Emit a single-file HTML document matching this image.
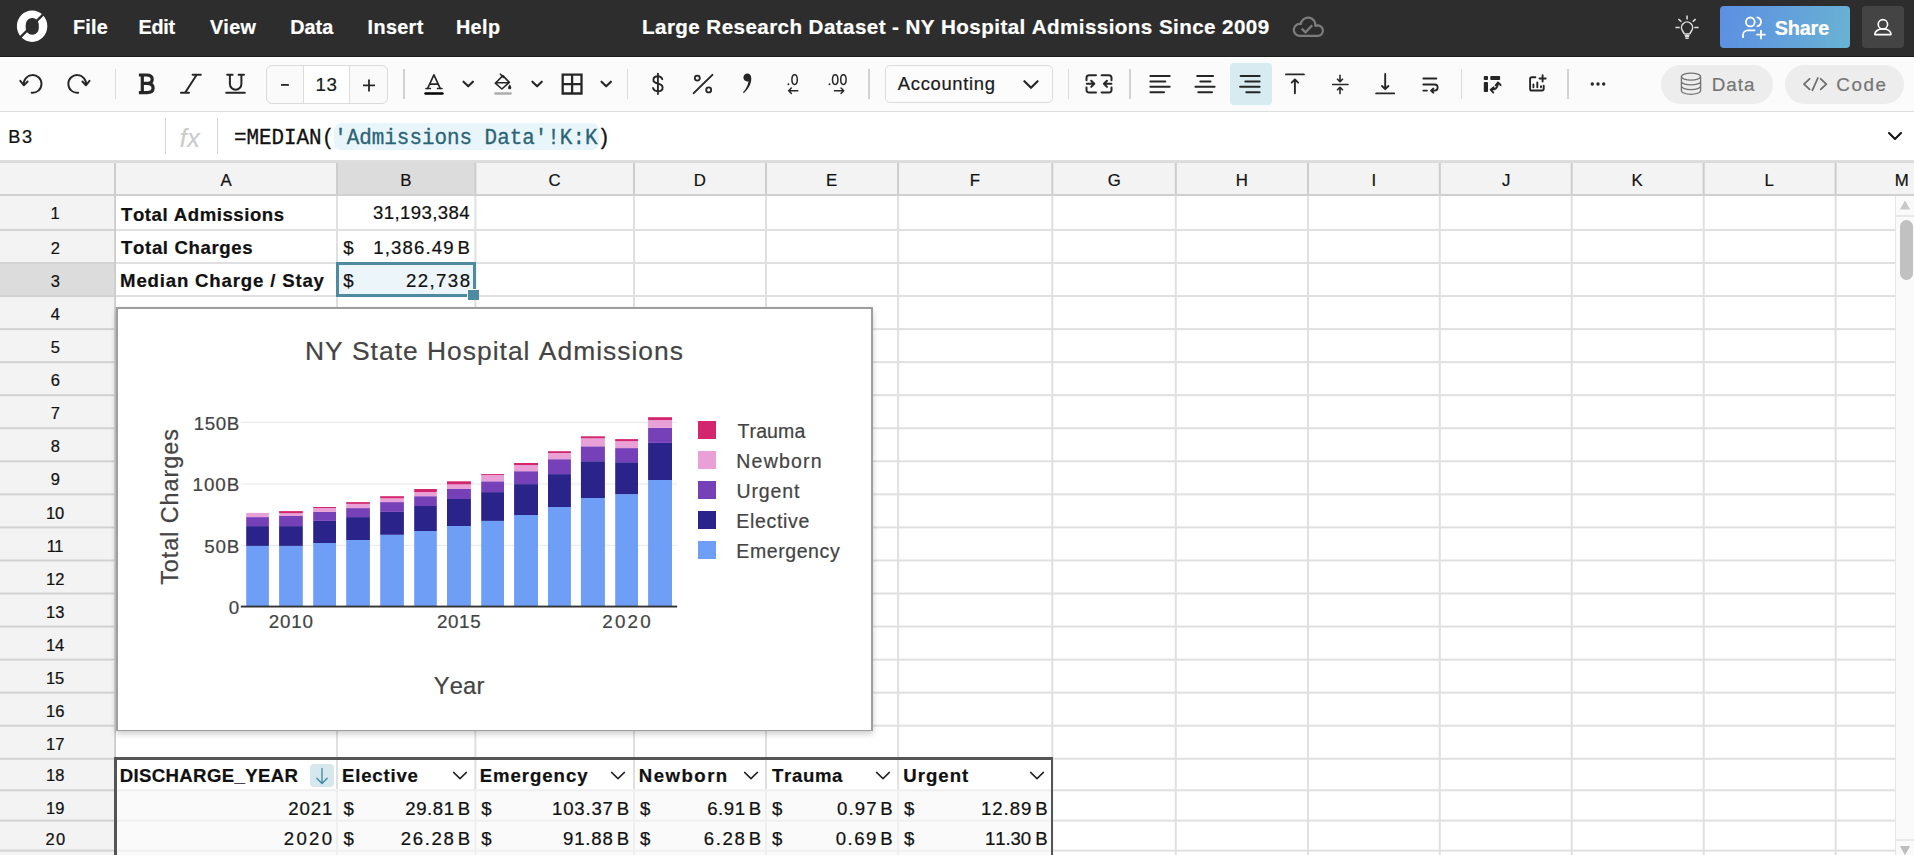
<!DOCTYPE html>
<html><head><meta charset="utf-8"><title>Quadratic</title><style>
*{box-sizing:border-box;margin:0;padding:0}
html,body{width:1914px;height:855px;overflow:hidden;background:#fff;font-family:"Liberation Sans", sans-serif;color:#111}
.abs{position:absolute}
#top{position:absolute;left:0;top:0;width:1914px;height:56px;background:#2d2d2d}
#top .m{position:absolute;top:15px;font-weight:700;font-size:19.5px;color:#fff;line-height:24px;white-space:nowrap}
#tb{position:absolute;left:0;top:56px;width:1914px;height:56px;background:#fbfbfb;border-bottom:1px solid #dedede}
.sep{position:absolute;top:13px;width:1px;height:30px;background:#d9d9d9}
#fb{position:absolute;left:0;top:112px;width:1914px;height:49px;background:#fff}
#grid{position:absolute;left:0;top:161px;width:1914px;height:694px;background:#fff;overflow:hidden}
.hl{position:absolute;left:0;height:1.5px;background:#e0e0e0}
.vl{position:absolute;top:0;width:1.5px;background:#e0e0e0}
.ch{position:absolute;top:2px;height:32px;font-size:16px;line-height:32px;text-align:center;color:#111}
.rh{position:absolute;left:0;width:115px;font-size:16px;text-align:center;color:#111}
.c{position:absolute;font-size:18.6px;white-space:nowrap;color:#111}
.b{font-weight:700}
</style></head><body><div id="top">
<svg class="abs" style="left:0;top:0" width="64" height="56" viewBox="0 0 64 56">
<ellipse cx="32.1" cy="26.2" rx="15.2" ry="15.7" fill="#fff"/>
<rect x="25.7" y="18" width="13.1" height="16.8" rx="6.3" ry="6.8" fill="#2d2d2d"/>
<path d="M19 38.6 L45 12.6" stroke="#2d2d2d" stroke-width="2.3"/>
</svg>
<div style="position:absolute;top:18.00px;font-size:19.8px;line-height:19.8px;white-space:pre;color:#fff;font-kerning:none;-webkit-text-stroke:0.22px;font-weight:700;letter-spacing:0.258px;left:72.99px;">File</div>
<div style="position:absolute;top:18.00px;font-size:19.8px;line-height:19.8px;white-space:pre;color:#fff;font-kerning:none;-webkit-text-stroke:0.22px;font-weight:700;letter-spacing:-0.250px;left:138.49px;">Edit</div>
<div style="position:absolute;top:18.00px;font-size:19.8px;line-height:19.8px;white-space:pre;color:#fff;font-kerning:none;-webkit-text-stroke:0.22px;font-weight:700;letter-spacing:0.285px;left:209.88px;">View</div>
<div style="position:absolute;top:18.00px;font-size:19.8px;line-height:19.8px;white-space:pre;color:#fff;font-kerning:none;-webkit-text-stroke:0.22px;font-weight:700;letter-spacing:0.018px;left:290.29px;">Data</div>
<div style="position:absolute;top:18.00px;font-size:19.8px;line-height:19.8px;white-space:pre;color:#fff;font-kerning:none;-webkit-text-stroke:0.22px;font-weight:700;letter-spacing:0.365px;left:367.59px;">Insert</div>
<div style="position:absolute;top:18.00px;font-size:19.8px;line-height:19.8px;white-space:pre;color:#fff;font-kerning:none;-webkit-text-stroke:0.22px;font-weight:700;letter-spacing:0.436px;left:455.89px;">Help</div>
<div style="position:absolute;top:17.00px;font-size:20.6px;line-height:20.6px;white-space:pre;color:#fff;font-kerning:none;-webkit-text-stroke:0.22px;font-weight:700;letter-spacing:0.420px;left:642.04px;">Large Research Dataset - NY Hospital Admissions Since 2009</div>
<svg class="abs" style="left:0;top:0" width="1914" height="56" viewBox="0 0 1914 56" fill="none" stroke-linecap="round" stroke-linejoin="round">
<path d="M1299.5 35.8 A5.95 5.95 0 1 1 1300.8 24 A7.3 7.3 0 0 1 1315.4 26 A5.2 5.2 0 1 1 1317.2 35.8 Z" stroke="#7d7d7d" stroke-width="2.2"/>
<path d="M1301.8 28.6 L1305.5 32.3 L1312.2 25.2" stroke="#7d7d7d" stroke-width="2.3" stroke-linecap="butt" stroke-linejoin="miter"/>
<g stroke="#dedede" stroke-width="1.55">
<path d="M1684.1 33.5 L1682.6 30.9 A5.55 5.55 0 1 1 1691.5 30.9 L1690 33.5"/>
<path d="M1684.4 33.9 H1689.7 M1684.6 35.4 H1689.5 M1685.0 36.7 H1689.1" stroke-linecap="butt" stroke-width="1.3"/>
<path d="M1685.4 38.2 H1688.7" stroke-linecap="butt" stroke-width="1.5"/>
<path d="M1687.05 15.4 V19.5 M1678.4 19.2 L1681.4 21.7 M1695.7 19.2 L1692.7 21.7 M1675.4 27.5 H1679.7 M1694.3 27.5 H1698.6" stroke-linecap="butt"/>
</g>
</svg>
<div class="abs" style="left:1720.1px;top:5.9px;width:130.1px;height:42.1px;border-radius:4px;background:linear-gradient(105deg,#5c8ee3,#69b3d3)"></div>
<div class="abs" style="left:1862.2px;top:5.9px;width:41.8px;height:42.1px;border-radius:4px;background:#444"></div>
<svg class="abs" style="left:1700px;top:0" width="214" height="56" viewBox="1700 0 214 56" fill="none" stroke="#fff" stroke-width="1.8" stroke-linecap="round" stroke-linejoin="round">
<circle cx="1750.3" cy="21.9" r="4.4"/>
<path d="M1757.3 17.4 A4.5 4.5 0 0 1 1757.5 26.2"/>
<path d="M1743 37.2 V35.2 A4.8 4.8 0 0 1 1747.8 30.4 H1754.6"/>
<path d="M1761 30.6 V38.6 M1757 34.6 H1765"/>
<g stroke-width="1.6"><circle cx="1882.9" cy="24.3" r="4.7"/>
<path d="M1874.8 34.6 C1874.8 31.2 1878.2 28.9 1882.9 28.9 C1887.6 28.9 1891 31.2 1891 34.6 Z"/></g>
</svg>
<div style="position:absolute;top:19.00px;font-size:19.8px;line-height:19.8px;white-space:pre;color:#fff;font-kerning:none;-webkit-text-stroke:0.22px;font-weight:700;letter-spacing:-0.100px;left:1774.65px;">Share</div>
</div>
<div id="tb"><div class="abs" style="left:0;top:0;width:1914px;height:1px;background:#1c1c1c"></div><div class="abs" style="left:0;top:1px;width:1914px;height:1px;background:#fff"></div>
<div style="position:absolute;left:1230px;top:7px;width:42px;height:41.6px;border-radius:4px;background:#d8ebf0"></div>
<div style="position:absolute;left:114.8px;top:13.3px;width:1.2px;height:29.4px;background:#dadada"></div>
<div style="position:absolute;left:402.9px;top:13.3px;width:2.0px;height:29.4px;background:#d2d2d2"></div>
<div style="position:absolute;left:626.9px;top:13.3px;width:1.2px;height:29.4px;background:#dadada"></div>
<div style="position:absolute;left:867.8px;top:13.3px;width:2.0px;height:29.4px;background:#d2d2d2"></div>
<div style="position:absolute;left:1067.9px;top:13.3px;width:1.2px;height:29.4px;background:#dadada"></div>
<div style="position:absolute;left:1129.0px;top:13.3px;width:2.0px;height:29.4px;background:#d2d2d2"></div>
<div style="position:absolute;left:1460.9px;top:13.3px;width:1.2px;height:29.4px;background:#dadada"></div>
<div style="position:absolute;left:1566.9px;top:13.3px;width:2.0px;height:29.4px;background:#d2d2d2"></div>
<div style="position:absolute;left:266.3px;top:8.9px;width:121.3px;height:38.7px;border:1px solid #dcdcdc;border-radius:6px;background:#fafafa;overflow:hidden"><div style="position:absolute;left:35.7px;top:0;width:47.4px;height:37px;background:#fff;border-left:1px solid #dcdcdc;border-right:1px solid #dcdcdc"></div></div>
<div style="position:absolute;top:20.00px;font-size:18.8px;line-height:18.8px;white-space:pre;color:#1a1a1a;font-kerning:none;-webkit-text-stroke:0.22px;letter-spacing:0.429px;left:315.52px;">13</div>
<div style="position:absolute;left:885.4px;top:8.9px;width:167.2px;height:38.2px;border:1px solid #dcdcdc;border-radius:5px;background:#fcfcfc"></div>
<div style="position:absolute;top:19.00px;font-size:18.4px;line-height:18.4px;white-space:pre;color:#1a1a1a;font-kerning:none;-webkit-text-stroke:0.22px;letter-spacing:0.675px;left:897.86px;">Accounting</div>
<div style="position:absolute;left:1661px;top:8.8px;width:111.8px;height:39.3px;border-radius:20px;background:#ededed"></div>
<div style="position:absolute;left:1785.2px;top:8.8px;width:118.6px;height:39.3px;border-radius:20px;background:#ededed"></div>
<div style="position:absolute;top:20.00px;font-size:18.8px;line-height:18.8px;white-space:pre;color:#767676;font-kerning:none;-webkit-text-stroke:0.22px;letter-spacing:0.938px;left:1711.86px;">Data</div>
<div style="position:absolute;top:20.00px;font-size:18.8px;line-height:18.8px;white-space:pre;color:#767676;font-kerning:none;-webkit-text-stroke:0.22px;letter-spacing:1.575px;left:1836.36px;">Code</div>
<svg style="position:absolute;left:0;top:0" width="1914" height="56" viewBox="0 56 1914 56" fill="none" stroke="#262626" stroke-width="2" stroke-linecap="round" stroke-linejoin="round">
<path d="M23.9 85.3 A8.85 8.85 0 1 1 31.6 92.7 M20.3 80.8 L23.9 85.3 L27.6 81.5" stroke-width="1.9"/>
<path d="M85.9 85.3 A8.85 8.85 0 1 0 78.2 92.7 M89.5 80.8 L85.9 85.3 L82.4 81.5" stroke-width="1.9"/>
<path d="M138.9 75 H146.5 C150.4 75 152.2 76.8 152.2 79.2 C152.2 81.6 150.4 83.4 146.8 83.4 H142.5 M146.8 83.4 C151.2 83.4 153.1 85.4 153.1 88 C153.1 90.6 151.2 92.6 147 92.6 H138.9 M142.3 75 V92.6" stroke-width="3.2" stroke-linecap="butt"/>
<path d="M192.6 74.8 H200.8 M181 92.8 H189 M196.7 74.8 L185.1 92.8" stroke-width="2"/>
<path d="M227.2 74.8 H232.6 M238.6 74.8 H244 M229.9 74.8 V84 A5.75 5.75 0 0 0 241.4 84 V74.8 M226.2 92.8 H244.8" stroke-width="2"/>
<path d="M281 84.9 H288.9" stroke-width="1.8" stroke-linecap="butt"/>
<path d="M363 85.4 H375 M369 79.4 V91.4" stroke-width="1.8" stroke-linecap="butt"/>
<path d="M427.6 88.5 L433.9 74.9 L440.3 88.5 M429.8 84.1 H438 M426 88.5 H430.3 M437.6 88.5 H441.9" stroke-width="1.7"/>
<rect x="424.3" y="92.2" width="19.4" height="2.6" rx="1.3" fill="#000" stroke="none"/>
<path d="M463.5 81.7 L468.2 86.3 L472.9 81.7" stroke-width="2.1"/>
<path d="M532.4 81.7 L537.1 86.3 L541.8 81.7" stroke-width="2.1"/>
<path d="M601.5 81.7 L606.2 86.3 L610.9 81.7" stroke-width="2.1"/>
<path d="M502.9 75.6 L509.3 82.4 L501.9 89 L495.3 83.2 Z M495.6 82.8 H509 M500.4 74.2 L503.6 77.4" stroke-width="1.6"/>
<path d="M509.7 84.6 C510.9 86.2 511.3 87 511.3 87.7 A1.6 1.6 0 0 1 508.1 87.7 C508.1 87 508.5 86.2 509.7 84.6 Z" fill="#262626" stroke="none"/>
<rect x="494.2" y="92.2" width="17.6" height="2.6" rx="1.3" fill="#adadad" stroke="none"/>
<path d="M562.7 74.7 H581.5 V93.5 H562.7 Z M572.1 74.7 V93.5 M562.7 84.1 H581.5" stroke-width="2.3" stroke-linejoin="miter"/>
<path d="M662.3 79.2 C661.6 77.4 660 76.3 657.9 76.3 C655.2 76.3 653.4 77.8 653.4 79.9 C653.4 84.6 662.6 82.4 662.6 87.4 C662.6 89.6 660.7 91.2 657.9 91.2 C655.4 91.2 653.7 90 653 88 M657.9 73.6 V94" stroke-width="1.9"/>
<path d="M712.4 74.9 L693.7 93.1" stroke-width="2"/><circle cx="697.3" cy="78.1" r="2.5" stroke-width="1.8"/><circle cx="708.7" cy="89.9" r="2.5" stroke-width="1.8"/>
<path d="M747.3 73.6 C749.6 73.6 751.3 75.3 751.3 78.6 C751.3 84.5 748.2 89.3 743.9 93.2 L743 92.3 C746.1 88.8 747.9 85.6 748.5 81.3 C748.2 81.4 747.7 81.5 747.2 81.5 C745 81.5 743.4 79.8 743.4 77.6 C743.4 75.3 745.1 73.6 747.3 73.6 Z" fill="#262626" stroke="none"/>
<circle cx="788.4" cy="84.3" r="0.95" fill="#262626" stroke="none"/><ellipse cx="794.6" cy="79.6" rx="2.7" ry="4.9" stroke-width="1.5"/>
<path d="M797.8 90.7 H788.6 M791.4 87.9 L788.6 90.7 L791.4 93.5" stroke-width="1.4"/>
<circle cx="829.5" cy="84.3" r="0.95" fill="#262626" stroke="none"/><ellipse cx="835.2" cy="79.6" rx="2.7" ry="4.9" stroke-width="1.5"/><ellipse cx="843.4" cy="79.6" rx="2.7" ry="4.9" stroke-width="1.5"/>
<path d="M834.4 90.7 H843.8 M841 87.9 L843.8 90.7 L841 93.5" stroke-width="1.4"/>
<path d="M1024.4 81.2 L1031 87.8 L1037.6 81.2" stroke-width="2.2"/>
<path d="M1086.5 80.3 V78 A2.6 2.6 0 0 1 1089.1 75.2 H1096 M1101.6 75.2 H1108.9 A2.6 2.6 0 0 1 1111.5 78 V80.3 M1111.5 87.4 V89.8 A2.6 2.6 0 0 1 1108.9 92.6 H1101.6 M1096 92.6 H1089.1 A2.6 2.6 0 0 1 1086.5 89.8 V87.4" stroke-width="2"/>
<path d="M1086.8 83.8 H1094.3 M1091.2 80.7 L1094.3 83.8 L1091.2 86.9 M1111.4 83.8 H1103.9 M1107 80.7 L1103.9 83.8 L1107 86.9" stroke-width="2"/>
<path d="M1150.4 75.9 H1169.7 M1150.4 81.4 H1165.3 M1150.4 86.8 H1169.7 M1150.4 92.2 H1164" stroke-width="2"/>
<path d="M1197.2 75.9 H1213.1 M1200.3 81.4 H1210.5 M1195.4 86.8 H1214.6 M1198.3 92.2 H1212" stroke-width="2"/>
<path d="M1240.6 75.9 H1259.6 M1245.3 81.4 H1259.6 M1240.1 86.8 H1259.6 M1246.3 92.2 H1259.6" stroke-width="2"/>
<path d="M1286 74.4 H1303.9 M1294.9 93.2 V79.4 M1291.7 82.6 L1294.9 79.4 L1298.1 82.6" stroke-width="1.9"/>
<path d="M1332.6 84.5 H1348 M1340 75.2 V81.6 M1337.5 79.2 L1340 81.7 L1342.5 79.2 M1340 93.6 V87.4 M1337.5 89.8 L1340 87.3 L1342.5 89.8" stroke-width="1.6"/>
<path d="M1385.2 74 V89 M1382 86 L1385.2 89.2 L1388.4 86 M1376.2 93.4 H1394.1" stroke-width="1.9"/>
<path d="M1423.3 78.5 H1436.4 M1423.3 84.5 H1434.6 A3.05 3.05 0 0 1 1434.6 90.6 H1431.2 M1433.4 88.5 L1431 90.6 L1433.4 92.7 M1423.3 90.6 H1427" stroke-width="1.8"/>
<g fill="#262626" stroke="none"><rect x="1483.8" y="76" width="4.2" height="4" rx="0.8"/><rect x="1490.3" y="76" width="9.8" height="4" rx="0.8"/><rect x="1483.8" y="82.1" width="4.2" height="9.9" rx="0.8"/></g>
<path d="M1491.6 89.6 C1495.8 89.6 1497.6 87.6 1497.9 83.6 M1495.6 85.4 L1498 82.4 L1500.6 85 M1493.7 87.2 L1490.6 89.7 L1493.3 92.6" stroke-width="1.8"/>
<path d="M1535.4 77.2 H1531.7 A1.6 1.6 0 0 0 1530.1 78.8 V88.9 A1.6 1.6 0 0 0 1531.7 90.5 H1542.1 A1.6 1.6 0 0 0 1543.7 88.9 V85.6 M1542.6 75.2 V81.6 M1539.5 78.5 H1545.7 M1533.4 84.4 V87.2 M1537.3 82.5 V87.2 M1541 86.3 V87.2" stroke-width="1.9"/>
<g fill="#262626" stroke="none"><circle cx="1592.3" cy="84" r="1.7"/><circle cx="1598" cy="84" r="1.7"/><circle cx="1603.7" cy="84" r="1.7"/></g>
<g stroke="#727272" stroke-width="1.3"><ellipse cx="1691" cy="76.6" rx="9.6" ry="3.5"/><path d="M1681.4 76.6 V90.8 C1681.4 92.7 1685.7 94.3 1691 94.3 C1696.3 94.3 1700.6 92.7 1700.6 90.8 V76.6 M1681.4 81.4 C1681.4 83.3 1685.7 84.9 1691 84.9 C1696.3 84.9 1700.6 83.3 1700.6 81.4 M1681.4 86.1 C1681.4 88 1685.7 89.6 1691 89.6 C1696.3 89.6 1700.6 88 1700.6 86.1"/></g>
<path d="M1809.6 78.8 L1804 84.1 L1809.6 89.4 M1817.9 78 L1812.4 90.2 M1820.7 78.8 L1826.3 84.1 L1820.7 89.4" stroke="#6e6e6e" stroke-width="1.8"/>
</svg>
</div>
<div id="fb">
<div style="position:absolute;top:16.00px;font-size:18.2px;line-height:18.2px;white-space:pre;color:#111;font-kerning:none;-webkit-text-stroke:0.22px;letter-spacing:1.516px;left:8.31px;">B3</div>
<div class="abs" style="left:165px;top:6px;width:1px;height:36px;background:#d4d4d4"></div>
<div class="abs" style="left:217px;top:6px;width:1px;height:36px;background:#d4d4d4"></div>
<div style="position:absolute;top:14.00px;font-size:25px;line-height:25px;white-space:pre;color:#cbcbcb;font-kerning:none;-webkit-text-stroke:0.22px;font-style:italic;letter-spacing:0.629px;left:179.78px;">fx</div>
<div class="abs" style="left:333.7px;top:11.2px;width:265px;height:27.3px;border-radius:7px;background:#e8f6fb"></div>
<div class="abs" style="left:233.9px;top:16.78px;font-family:'Liberation Mono',monospace;font-size:20.9px;line-height:20.9px;white-space:pre;color:#111;-webkit-text-stroke:0.3px;transform-origin:0 16.02px;transform:scaleY(1.06)">=MEDIAN(<span style="color:#2c6377">'Admissions Data'!K:K</span>)</div>
<svg class="abs" style="left:1886px;top:18px" width="18" height="12" viewBox="0 0 18 12" fill="none" stroke="#111" stroke-width="2" stroke-linecap="round" stroke-linejoin="round"><path d="M3 3 l6 6 l6 -6"/></svg>
<div class="abs" style="left:0;top:48px;width:1914px;height:1px;background:#dedede"></div>
</div>
<div id="grid">
<div style="position:absolute;left:0;top:0;width:1914px;height:2px;background:#dcdcdc"></div>
<div style="position:absolute;left:0;top:2px;width:1914px;height:32px;background:#f3f3f3"></div>
<div style="position:absolute;left:337px;top:2px;width:137.5px;height:32px;background:#dcdcdc"></div>
<div style="position:absolute;left:0;top:34px;width:115px;height:660px;background:#f3f3f3"></div>
<div style="position:absolute;left:0;top:102px;width:115px;height:33px;background:#dcdcdc"></div>
<svg style="position:absolute;left:0;top:0" width="1914" height="694" viewBox="0 0 1914 694">
<rect x="115" y="67.95" width="1781" height="2" fill="#e0e0e0"/>
<rect x="0" y="67.95" width="115" height="2" fill="#d2d2d2"/>
<rect x="115" y="101.00" width="1781" height="2" fill="#e0e0e0"/>
<rect x="0" y="101.00" width="115" height="2" fill="#d2d2d2"/>
<rect x="115" y="134.05" width="1781" height="2" fill="#e0e0e0"/>
<rect x="0" y="134.05" width="115" height="2" fill="#d2d2d2"/>
<rect x="115" y="167.10" width="1781" height="2" fill="#e0e0e0"/>
<rect x="0" y="167.10" width="115" height="2" fill="#d2d2d2"/>
<rect x="115" y="200.15" width="1781" height="2" fill="#e0e0e0"/>
<rect x="0" y="200.15" width="115" height="2" fill="#d2d2d2"/>
<rect x="115" y="233.20" width="1781" height="2" fill="#e0e0e0"/>
<rect x="0" y="233.20" width="115" height="2" fill="#d2d2d2"/>
<rect x="115" y="266.25" width="1781" height="2" fill="#e0e0e0"/>
<rect x="0" y="266.25" width="115" height="2" fill="#d2d2d2"/>
<rect x="115" y="299.30" width="1781" height="2" fill="#e0e0e0"/>
<rect x="0" y="299.30" width="115" height="2" fill="#d2d2d2"/>
<rect x="115" y="332.35" width="1781" height="2" fill="#e0e0e0"/>
<rect x="0" y="332.35" width="115" height="2" fill="#d2d2d2"/>
<rect x="115" y="365.40" width="1781" height="2" fill="#e0e0e0"/>
<rect x="0" y="365.40" width="115" height="2" fill="#d2d2d2"/>
<rect x="115" y="398.45" width="1781" height="2" fill="#e0e0e0"/>
<rect x="0" y="398.45" width="115" height="2" fill="#d2d2d2"/>
<rect x="115" y="431.50" width="1781" height="2" fill="#e0e0e0"/>
<rect x="0" y="431.50" width="115" height="2" fill="#d2d2d2"/>
<rect x="115" y="464.55" width="1781" height="2" fill="#e0e0e0"/>
<rect x="0" y="464.55" width="115" height="2" fill="#d2d2d2"/>
<rect x="115" y="497.60" width="1781" height="2" fill="#e0e0e0"/>
<rect x="0" y="497.60" width="115" height="2" fill="#d2d2d2"/>
<rect x="115" y="530.65" width="1781" height="2" fill="#e0e0e0"/>
<rect x="0" y="530.65" width="115" height="2" fill="#d2d2d2"/>
<rect x="115" y="563.70" width="1781" height="2" fill="#e0e0e0"/>
<rect x="0" y="563.70" width="115" height="2" fill="#d2d2d2"/>
<rect x="115" y="596.75" width="1781" height="2" fill="#e0e0e0"/>
<rect x="0" y="596.75" width="115" height="2" fill="#d2d2d2"/>
<rect x="115" y="628.30" width="1781" height="2" fill="#e0e0e0"/>
<rect x="0" y="628.30" width="115" height="2" fill="#d2d2d2"/>
<rect x="115" y="658.60" width="1781" height="2" fill="#e0e0e0"/>
<rect x="0" y="658.60" width="115" height="2" fill="#d2d2d2"/>
<rect x="115" y="688.60" width="1781" height="2" fill="#e0e0e0"/>
<rect x="0" y="688.60" width="115" height="2" fill="#d2d2d2"/>
<rect x="336.00" y="34" width="2" height="660" fill="#e0e0e0"/>
<rect x="474.40" y="34" width="2" height="660" fill="#e0e0e0"/>
<rect x="633.00" y="34" width="2" height="660" fill="#e0e0e0"/>
<rect x="765.00" y="34" width="2" height="660" fill="#e0e0e0"/>
<rect x="897.10" y="34" width="2" height="660" fill="#e0e0e0"/>
<rect x="1051.30" y="34" width="2" height="660" fill="#e0e0e0"/>
<rect x="1174.80" y="34" width="2" height="660" fill="#e0e0e0"/>
<rect x="1307.00" y="34" width="2" height="660" fill="#e0e0e0"/>
<rect x="1438.80" y="34" width="2" height="660" fill="#e0e0e0"/>
<rect x="1570.70" y="34" width="2" height="660" fill="#e0e0e0"/>
<rect x="1702.70" y="34" width="2" height="660" fill="#e0e0e0"/>
<rect x="1834.60" y="34" width="2" height="660" fill="#e0e0e0"/>
<rect x="114.00" y="2" width="2" height="33" fill="#cdcdcd"/>
<rect x="336.00" y="2" width="2" height="33" fill="#cdcdcd"/>
<rect x="474.40" y="2" width="2" height="33" fill="#cdcdcd"/>
<rect x="633.00" y="2" width="2" height="33" fill="#cdcdcd"/>
<rect x="765.00" y="2" width="2" height="33" fill="#cdcdcd"/>
<rect x="897.10" y="2" width="2" height="33" fill="#cdcdcd"/>
<rect x="1051.30" y="2" width="2" height="33" fill="#cdcdcd"/>
<rect x="1174.80" y="2" width="2" height="33" fill="#cdcdcd"/>
<rect x="1307.00" y="2" width="2" height="33" fill="#cdcdcd"/>
<rect x="1438.80" y="2" width="2" height="33" fill="#cdcdcd"/>
<rect x="1570.70" y="2" width="2" height="33" fill="#cdcdcd"/>
<rect x="1702.70" y="2" width="2" height="33" fill="#cdcdcd"/>
<rect x="1834.60" y="2" width="2" height="33" fill="#cdcdcd"/>
<rect x="0" y="33" width="1914" height="2" fill="#d0d0d0"/>
<rect x="114.2" y="34" width="1.8" height="660" fill="#cccccc"/>
</svg>
<div style="position:absolute;left:116px;top:628.3px;width:936px;height:66px;background:rgba(247,247,247,0.64)"></div>
<div style="position:absolute;top:12.00px;font-size:16.8px;line-height:16.8px;white-space:pre;color:#111;font-kerning:none;-webkit-text-stroke:0.22px;left:220.40px;">A</div>
<div style="position:absolute;top:12.00px;font-size:16.8px;line-height:16.8px;white-space:pre;color:#111;font-kerning:none;-webkit-text-stroke:0.22px;left:400.35px;">B</div>
<div style="position:absolute;top:12.00px;font-size:16.8px;line-height:16.8px;white-space:pre;color:#111;font-kerning:none;-webkit-text-stroke:0.22px;left:548.53px;">C</div>
<div style="position:absolute;top:12.00px;font-size:16.8px;line-height:16.8px;white-space:pre;color:#111;font-kerning:none;-webkit-text-stroke:0.22px;left:693.64px;">D</div>
<div style="position:absolute;top:12.00px;font-size:16.8px;line-height:16.8px;white-space:pre;color:#111;font-kerning:none;-webkit-text-stroke:0.22px;left:826.11px;">E</div>
<div style="position:absolute;top:12.00px;font-size:16.8px;line-height:16.8px;white-space:pre;color:#111;font-kerning:none;-webkit-text-stroke:0.22px;left:969.71px;">F</div>
<div style="position:absolute;top:12.00px;font-size:16.8px;line-height:16.8px;white-space:pre;color:#111;font-kerning:none;-webkit-text-stroke:0.22px;left:1107.72px;">G</div>
<div style="position:absolute;top:12.00px;font-size:16.8px;line-height:16.8px;white-space:pre;color:#111;font-kerning:none;-webkit-text-stroke:0.22px;left:1235.83px;">H</div>
<div style="position:absolute;top:12.00px;font-size:16.8px;line-height:16.8px;white-space:pre;color:#111;font-kerning:none;-webkit-text-stroke:0.22px;left:1371.56px;">I</div>
<div style="position:absolute;top:12.00px;font-size:16.8px;line-height:16.8px;white-space:pre;color:#111;font-kerning:none;-webkit-text-stroke:0.22px;left:1502.05px;">J</div>
<div style="position:absolute;top:12.00px;font-size:16.8px;line-height:16.8px;white-space:pre;color:#111;font-kerning:none;-webkit-text-stroke:0.22px;left:1631.50px;">K</div>
<div style="position:absolute;top:12.00px;font-size:16.8px;line-height:16.8px;white-space:pre;color:#111;font-kerning:none;-webkit-text-stroke:0.22px;left:1764.57px;">L</div>
<div style="position:absolute;top:12.00px;font-size:16.8px;line-height:16.8px;white-space:pre;color:#111;font-kerning:none;-webkit-text-stroke:0.22px;left:1894.80px;">M</div>
<div style="position:absolute;top:44.00px;font-size:16.5px;line-height:16.5px;white-space:pre;color:#111;font-kerning:none;-webkit-text-stroke:0.22px;left:50.58px;">1</div>
<div style="position:absolute;top:79.00px;font-size:16.5px;line-height:16.5px;white-space:pre;color:#111;font-kerning:none;-webkit-text-stroke:0.22px;left:50.81px;">2</div>
<div style="position:absolute;top:112.00px;font-size:16.5px;line-height:16.5px;white-space:pre;color:#111;font-kerning:none;-webkit-text-stroke:0.22px;left:50.85px;">3</div>
<div style="position:absolute;top:145.00px;font-size:16.5px;line-height:16.5px;white-space:pre;color:#111;font-kerning:none;-webkit-text-stroke:0.22px;left:50.87px;">4</div>
<div style="position:absolute;top:178.00px;font-size:16.5px;line-height:16.5px;white-space:pre;color:#111;font-kerning:none;-webkit-text-stroke:0.22px;left:50.82px;">5</div>
<div style="position:absolute;top:211.00px;font-size:16.5px;line-height:16.5px;white-space:pre;color:#111;font-kerning:none;-webkit-text-stroke:0.22px;left:50.76px;">6</div>
<div style="position:absolute;top:244.00px;font-size:16.5px;line-height:16.5px;white-space:pre;color:#111;font-kerning:none;-webkit-text-stroke:0.22px;left:50.80px;">7</div>
<div style="position:absolute;top:277.00px;font-size:16.5px;line-height:16.5px;white-space:pre;color:#111;font-kerning:none;-webkit-text-stroke:0.22px;left:50.81px;">8</div>
<div style="position:absolute;top:310.00px;font-size:16.5px;line-height:16.5px;white-space:pre;color:#111;font-kerning:none;-webkit-text-stroke:0.22px;left:50.82px;">9</div>
<div style="position:absolute;top:344.00px;font-size:16.5px;line-height:16.5px;white-space:pre;color:#111;font-kerning:none;-webkit-text-stroke:0.22px;letter-spacing:-0.070px;left:45.95px;">10</div>
<div style="position:absolute;top:377.00px;font-size:16.5px;line-height:16.5px;white-space:pre;color:#111;font-kerning:none;-webkit-text-stroke:0.22px;letter-spacing:-1.705px;left:46.85px;">11</div>
<div style="position:absolute;top:410.00px;font-size:16.5px;line-height:16.5px;white-space:pre;color:#111;font-kerning:none;-webkit-text-stroke:0.22px;letter-spacing:0.128px;left:45.95px;">12</div>
<div style="position:absolute;top:443.00px;font-size:16.5px;line-height:16.5px;white-space:pre;color:#111;font-kerning:none;-webkit-text-stroke:0.22px;letter-spacing:0.013px;left:45.95px;">13</div>
<div style="position:absolute;top:476.00px;font-size:16.5px;line-height:16.5px;white-space:pre;color:#111;font-kerning:none;-webkit-text-stroke:0.22px;letter-spacing:-0.218px;left:45.95px;">14</div>
<div style="position:absolute;top:509.00px;font-size:16.5px;line-height:16.5px;white-space:pre;color:#111;font-kerning:none;-webkit-text-stroke:0.22px;letter-spacing:-0.020px;left:45.95px;">15</div>
<div style="position:absolute;top:542.00px;font-size:16.5px;line-height:16.5px;white-space:pre;color:#111;font-kerning:none;-webkit-text-stroke:0.22px;letter-spacing:0.013px;left:45.95px;">16</div>
<div style="position:absolute;top:575.00px;font-size:16.5px;line-height:16.5px;white-space:pre;color:#111;font-kerning:none;-webkit-text-stroke:0.22px;letter-spacing:0.128px;left:45.95px;">17</div>
<div style="position:absolute;top:606.00px;font-size:16.5px;line-height:16.5px;white-space:pre;color:#111;font-kerning:none;-webkit-text-stroke:0.22px;letter-spacing:0.013px;left:45.95px;">18</div>
<div style="position:absolute;top:639.00px;font-size:16.5px;line-height:16.5px;white-space:pre;color:#111;font-kerning:none;-webkit-text-stroke:0.22px;letter-spacing:0.079px;left:45.95px;">19</div>
<div style="position:absolute;top:670.00px;font-size:16.5px;line-height:16.5px;white-space:pre;color:#111;font-kerning:none;-webkit-text-stroke:0.22px;letter-spacing:1.401px;left:45.42px;">20</div>
<div style="position:absolute;top:45.00px;font-size:18.6px;line-height:18.6px;white-space:pre;color:#111;font-kerning:none;-webkit-text-stroke:0.22px;font-weight:700;letter-spacing:0.529px;left:121.10px;">Total Admissions</div>
<div style="position:absolute;top:78.00px;font-size:18.6px;line-height:18.6px;white-space:pre;color:#111;font-kerning:none;-webkit-text-stroke:0.22px;font-weight:700;letter-spacing:0.627px;left:121.10px;">Total Charges</div>
<div style="position:absolute;top:111.00px;font-size:18.6px;line-height:18.6px;white-space:pre;color:#111;font-kerning:none;-webkit-text-stroke:0.22px;font-weight:700;letter-spacing:0.832px;left:120.07px;">Median Charge / Stay</div>
<div style="position:absolute;top:43.00px;font-size:18.6px;line-height:18.6px;white-space:pre;color:#111;font-kerning:none;-webkit-text-stroke:0.22px;letter-spacing:0.384px;left:372.99px;">31,193,384</div>
<div style="position:absolute;top:78.00px;font-size:18.6px;line-height:18.6px;white-space:pre;color:#111;font-kerning:none;-webkit-text-stroke:0.22px;left:343.21px;">$</div>
<div style="position:absolute;top:78.00px;font-size:18.6px;line-height:18.6px;white-space:pre;color:#111;font-kerning:none;-webkit-text-stroke:0.22px;left:457.56px;">B</div><div style="position:absolute;top:78.00px;font-size:18.6px;line-height:18.6px;white-space:pre;color:#111;font-kerning:none;-webkit-text-stroke:0.22px;letter-spacing:1.141px;left:373.29px;">1,386.49</div>
<div style="position:absolute;left:336.3px;top:101.4px;width:139.6px;height:34.4px;background:#4f8ba0"></div>
<div style="position:absolute;left:339px;top:104.1px;width:134.2px;height:29px;background:#ecf5f9"></div>
<div style="position:absolute;top:111.00px;font-size:18.6px;line-height:18.6px;white-space:pre;color:#111;font-kerning:none;-webkit-text-stroke:0.22px;left:343.21px;">$</div>
<div style="position:absolute;top:111.00px;font-size:18.6px;line-height:18.6px;white-space:pre;color:#111;font-kerning:none;-webkit-text-stroke:0.22px;letter-spacing:1.429px;left:405.97px;">22,738</div>
<div style="position:absolute;left:467.4px;top:127.7px;width:11.6px;height:11.3px;background:#4f8ba0;border-left:1px solid #fff;border-top:1px solid #fff"></div>
<div style="position:absolute;top:606.00px;font-size:18.6px;line-height:18.6px;white-space:pre;color:#111;font-kerning:none;-webkit-text-stroke:0.22px;font-weight:700;letter-spacing:0.359px;left:119.67px;">DISCHARGE_YEAR</div>
<div style="position:absolute;top:606.00px;font-size:18.6px;line-height:18.6px;white-space:pre;color:#111;font-kerning:none;-webkit-text-stroke:0.22px;font-weight:700;letter-spacing:0.793px;left:342.07px;">Elective</div>
<svg style="position:absolute;left:451px;top:608.8px" width="18" height="12" viewBox="0 0 18 12" fill="none" stroke="#222" stroke-width="1.5" stroke-linecap="round" stroke-linejoin="round"><path d="M2.6 2.4 L9 8.6 L15.4 2.4"/></svg>
<div style="position:absolute;top:606.00px;font-size:18.6px;line-height:18.6px;white-space:pre;color:#111;font-kerning:none;-webkit-text-stroke:0.22px;font-weight:700;letter-spacing:0.955px;left:479.67px;">Emergency</div>
<svg style="position:absolute;left:609.4px;top:608.8px" width="18" height="12" viewBox="0 0 18 12" fill="none" stroke="#222" stroke-width="1.5" stroke-linecap="round" stroke-linejoin="round"><path d="M2.6 2.4 L9 8.6 L15.4 2.4"/></svg>
<div style="position:absolute;top:606.00px;font-size:18.6px;line-height:18.6px;white-space:pre;color:#111;font-kerning:none;-webkit-text-stroke:0.22px;font-weight:700;letter-spacing:1.468px;left:638.87px;">Newborn</div>
<svg style="position:absolute;left:741.6px;top:608.8px" width="18" height="12" viewBox="0 0 18 12" fill="none" stroke="#222" stroke-width="1.5" stroke-linecap="round" stroke-linejoin="round"><path d="M2.6 2.4 L9 8.6 L15.4 2.4"/></svg>
<div style="position:absolute;top:606.00px;font-size:18.6px;line-height:18.6px;white-space:pre;color:#111;font-kerning:none;-webkit-text-stroke:0.22px;font-weight:700;letter-spacing:0.638px;left:772.10px;">Trauma</div>
<svg style="position:absolute;left:873.5px;top:608.8px" width="18" height="12" viewBox="0 0 18 12" fill="none" stroke="#222" stroke-width="1.5" stroke-linecap="round" stroke-linejoin="round"><path d="M2.6 2.4 L9 8.6 L15.4 2.4"/></svg>
<div style="position:absolute;top:606.00px;font-size:18.6px;line-height:18.6px;white-space:pre;color:#111;font-kerning:none;-webkit-text-stroke:0.22px;font-weight:700;letter-spacing:1.041px;left:903.18px;">Urgent</div>
<svg style="position:absolute;left:1028px;top:608.8px" width="18" height="12" viewBox="0 0 18 12" fill="none" stroke="#222" stroke-width="1.5" stroke-linecap="round" stroke-linejoin="round"><path d="M2.6 2.4 L9 8.6 L15.4 2.4"/></svg>
<div style="position:absolute;left:309.5px;top:602.5px;width:24px;height:23.6px;border-radius:4px;background:#d6e7ed"></div>
<svg style="position:absolute;left:309.5px;top:602.5px" width="24" height="24" viewBox="0 0 24 24" fill="none" stroke="#3d89a1" stroke-width="1.3" stroke-linecap="round" stroke-linejoin="round"><path d="M12 4.5 V19.5 M6.8 14.3 L12 19.5 L17.2 14.3"/></svg>
<div style="position:absolute;top:639.00px;font-size:18.6px;line-height:18.6px;white-space:pre;color:#111;font-kerning:none;-webkit-text-stroke:0.22px;letter-spacing:0.849px;left:288.37px;">2021</div>
<div style="position:absolute;top:639.00px;font-size:18.6px;line-height:18.6px;white-space:pre;color:#111;font-kerning:none;-webkit-text-stroke:0.22px;left:343.41px;">$</div>
<div style="position:absolute;top:639.00px;font-size:18.6px;line-height:18.6px;white-space:pre;color:#111;font-kerning:none;-webkit-text-stroke:0.22px;left:457.86px;">B</div><div style="position:absolute;top:639.00px;font-size:18.6px;line-height:18.6px;white-space:pre;color:#111;font-kerning:none;-webkit-text-stroke:0.22px;letter-spacing:0.545px;left:405.27px;">29.81</div>
<div style="position:absolute;top:639.00px;font-size:18.6px;line-height:18.6px;white-space:pre;color:#111;font-kerning:none;-webkit-text-stroke:0.22px;left:481.21px;">$</div>
<div style="position:absolute;top:639.00px;font-size:18.6px;line-height:18.6px;white-space:pre;color:#111;font-kerning:none;-webkit-text-stroke:0.22px;left:616.76px;">B</div><div style="position:absolute;top:639.00px;font-size:18.6px;line-height:18.6px;white-space:pre;color:#111;font-kerning:none;-webkit-text-stroke:0.22px;letter-spacing:0.811px;left:551.99px;">103.37</div>
<div style="position:absolute;top:639.00px;font-size:18.6px;line-height:18.6px;white-space:pre;color:#111;font-kerning:none;-webkit-text-stroke:0.22px;left:639.91px;">$</div>
<div style="position:absolute;top:639.00px;font-size:18.6px;line-height:18.6px;white-space:pre;color:#111;font-kerning:none;-webkit-text-stroke:0.22px;left:748.86px;">B</div><div style="position:absolute;top:639.00px;font-size:18.6px;line-height:18.6px;white-space:pre;color:#111;font-kerning:none;-webkit-text-stroke:0.22px;letter-spacing:0.508px;left:707.27px;">6.91</div>
<div style="position:absolute;top:639.00px;font-size:18.6px;line-height:18.6px;white-space:pre;color:#111;font-kerning:none;-webkit-text-stroke:0.22px;left:772.11px;">$</div>
<div style="position:absolute;top:639.00px;font-size:18.6px;line-height:18.6px;white-space:pre;color:#111;font-kerning:none;-webkit-text-stroke:0.22px;left:880.36px;">B</div><div style="position:absolute;top:639.00px;font-size:18.6px;line-height:18.6px;white-space:pre;color:#111;font-kerning:none;-webkit-text-stroke:0.22px;letter-spacing:1.086px;left:837.07px;">0.97</div>
<div style="position:absolute;top:639.00px;font-size:18.6px;line-height:18.6px;white-space:pre;color:#111;font-kerning:none;-webkit-text-stroke:0.22px;left:904.11px;">$</div>
<div style="position:absolute;top:639.00px;font-size:18.6px;line-height:18.6px;white-space:pre;color:#111;font-kerning:none;-webkit-text-stroke:0.22px;left:1035.26px;">B</div><div style="position:absolute;top:639.00px;font-size:18.6px;line-height:18.6px;white-space:pre;color:#111;font-kerning:none;-webkit-text-stroke:0.22px;letter-spacing:0.961px;left:980.99px;">12.89</div>
<div style="position:absolute;top:669.00px;font-size:18.6px;line-height:18.6px;white-space:pre;color:#111;font-kerning:none;-webkit-text-stroke:0.22px;letter-spacing:2.321px;left:283.77px;">2020</div>
<div style="position:absolute;top:669.00px;font-size:18.6px;line-height:18.6px;white-space:pre;color:#111;font-kerning:none;-webkit-text-stroke:0.22px;left:343.41px;">$</div>
<div style="position:absolute;top:669.00px;font-size:18.6px;line-height:18.6px;white-space:pre;color:#111;font-kerning:none;-webkit-text-stroke:0.22px;left:457.86px;">B</div><div style="position:absolute;top:669.00px;font-size:18.6px;line-height:18.6px;white-space:pre;color:#111;font-kerning:none;-webkit-text-stroke:0.22px;letter-spacing:1.622px;left:400.87px;">26.28</div>
<div style="position:absolute;top:669.00px;font-size:18.6px;line-height:18.6px;white-space:pre;color:#111;font-kerning:none;-webkit-text-stroke:0.22px;left:481.21px;">$</div>
<div style="position:absolute;top:669.00px;font-size:18.6px;line-height:18.6px;white-space:pre;color:#111;font-kerning:none;-webkit-text-stroke:0.22px;left:616.76px;">B</div><div style="position:absolute;top:669.00px;font-size:18.6px;line-height:18.6px;white-space:pre;color:#111;font-kerning:none;-webkit-text-stroke:0.22px;letter-spacing:0.803px;left:563.04px;">91.88</div>
<div style="position:absolute;top:669.00px;font-size:18.6px;line-height:18.6px;white-space:pre;color:#111;font-kerning:none;-webkit-text-stroke:0.22px;left:639.91px;">$</div>
<div style="position:absolute;top:669.00px;font-size:18.6px;line-height:18.6px;white-space:pre;color:#111;font-kerning:none;-webkit-text-stroke:0.22px;left:748.86px;">B</div><div style="position:absolute;top:669.00px;font-size:18.6px;line-height:18.6px;white-space:pre;color:#111;font-kerning:none;-webkit-text-stroke:0.22px;letter-spacing:1.644px;left:703.77px;">6.28</div>
<div style="position:absolute;top:669.00px;font-size:18.6px;line-height:18.6px;white-space:pre;color:#111;font-kerning:none;-webkit-text-stroke:0.22px;left:772.11px;">$</div>
<div style="position:absolute;top:669.00px;font-size:18.6px;line-height:18.6px;white-space:pre;color:#111;font-kerning:none;-webkit-text-stroke:0.22px;left:880.36px;">B</div><div style="position:absolute;top:669.00px;font-size:18.6px;line-height:18.6px;white-space:pre;color:#111;font-kerning:none;-webkit-text-stroke:0.22px;letter-spacing:1.534px;left:835.67px;">0.69</div>
<div style="position:absolute;top:669.00px;font-size:18.6px;line-height:18.6px;white-space:pre;color:#111;font-kerning:none;-webkit-text-stroke:0.22px;left:904.11px;">$</div>
<div style="position:absolute;top:669.00px;font-size:18.6px;line-height:18.6px;white-space:pre;color:#111;font-kerning:none;-webkit-text-stroke:0.22px;left:1035.26px;">B</div><div style="position:absolute;top:669.00px;font-size:18.6px;line-height:18.6px;white-space:pre;color:#111;font-kerning:none;-webkit-text-stroke:0.22px;letter-spacing:-0.056px;left:984.89px;">11.30</div>
<div style="position:absolute;left:114.4px;top:596.4px;width:939px;height:2.5px;background:#555"></div>
<div style="position:absolute;left:114.4px;top:596.4px;width:2.6px;height:110px;background:#555"></div>
<div style="position:absolute;left:1050.8px;top:596.4px;width:2.6px;height:110px;background:#555"></div>
<div style="position:absolute;left:116.2px;top:146.4px;width:756.5px;height:424.1px;background:#9e9e9e;box-shadow:0 3px 6px rgba(0,0,0,0.2)"></div>
<div style="position:absolute;left:117.8px;top:148.0px;width:753.3px;height:420.9px;background:#fff"></div>
<svg style="position:absolute;left:0;top:239px" width="900" height="230" viewBox="0 400 900 230">
<rect x="241" y="421.7" width="436" height="1.2" fill="#ebebeb"/>
<rect x="241" y="483.4" width="436" height="1.2" fill="#ebebeb"/>
<rect x="241" y="544.8" width="436" height="1.2" fill="#ebebeb"/>
<rect x="246.2" y="545.9" width="22.7" height="60.6" fill="#6f9ef6"/>
<rect x="246.2" y="526.1" width="22.7" height="19.8" fill="#2a2389"/>
<rect x="246.2" y="517.1" width="22.7" height="9.0" fill="#7640b8"/>
<rect x="246.2" y="512.9" width="22.7" height="4.2" fill="#e8a0d6"/>
<rect x="279.1" y="545.9" width="23.7" height="60.6" fill="#6f9ef6"/>
<rect x="279.1" y="526.1" width="23.7" height="19.8" fill="#2a2389"/>
<rect x="279.1" y="516.0" width="23.7" height="10.1" fill="#7640b8"/>
<rect x="279.1" y="513.2" width="23.7" height="2.8" fill="#e8a0d6"/>
<rect x="279.1" y="511.1" width="23.7" height="2.1" fill="#d3266f"/>
<rect x="313.2" y="543.0" width="22.8" height="63.5" fill="#6f9ef6"/>
<rect x="313.2" y="520.9" width="22.8" height="22.1" fill="#2a2389"/>
<rect x="313.2" y="511.9" width="22.8" height="9.0" fill="#7640b8"/>
<rect x="313.2" y="508.1" width="22.8" height="3.8" fill="#e8a0d6"/>
<rect x="313.2" y="507.0" width="22.8" height="1.1" fill="#d3266f"/>
<rect x="346.2" y="540.0" width="23.7" height="66.5" fill="#6f9ef6"/>
<rect x="346.2" y="517.1" width="23.7" height="22.9" fill="#2a2389"/>
<rect x="346.2" y="508.1" width="23.7" height="9.0" fill="#7640b8"/>
<rect x="346.2" y="503.9" width="23.7" height="4.2" fill="#e8a0d6"/>
<rect x="346.2" y="502.1" width="23.7" height="1.8" fill="#d3266f"/>
<rect x="380.2" y="534.8" width="23.7" height="71.7" fill="#6f9ef6"/>
<rect x="380.2" y="511.9" width="23.7" height="22.9" fill="#2a2389"/>
<rect x="380.2" y="502.1" width="23.7" height="9.8" fill="#7640b8"/>
<rect x="380.2" y="498.3" width="23.7" height="3.8" fill="#e8a0d6"/>
<rect x="380.2" y="496.2" width="23.7" height="2.1" fill="#d3266f"/>
<rect x="414.2" y="531.0" width="22.6" height="75.5" fill="#6f9ef6"/>
<rect x="414.2" y="506.0" width="22.6" height="25.0" fill="#2a2389"/>
<rect x="414.2" y="496.2" width="22.6" height="9.8" fill="#7640b8"/>
<rect x="414.2" y="492.1" width="22.6" height="4.1" fill="#e8a0d6"/>
<rect x="414.2" y="489.0" width="22.6" height="3.1" fill="#d3266f"/>
<rect x="447.0" y="526.0" width="23.9" height="80.5" fill="#6f9ef6"/>
<rect x="447.0" y="499.0" width="23.9" height="27.0" fill="#2a2389"/>
<rect x="447.0" y="489.0" width="23.9" height="10.0" fill="#7640b8"/>
<rect x="447.0" y="484.4" width="23.9" height="4.6" fill="#e8a0d6"/>
<rect x="447.0" y="481.3" width="23.9" height="3.1" fill="#d3266f"/>
<rect x="481.2" y="520.9" width="22.8" height="85.6" fill="#6f9ef6"/>
<rect x="481.2" y="492.1" width="22.8" height="28.8" fill="#2a2389"/>
<rect x="481.2" y="481.3" width="22.8" height="10.8" fill="#7640b8"/>
<rect x="481.2" y="475.1" width="22.8" height="6.2" fill="#e8a0d6"/>
<rect x="481.2" y="474.1" width="22.8" height="1.0" fill="#d3266f"/>
<rect x="514.1" y="515.0" width="23.9" height="91.5" fill="#6f9ef6"/>
<rect x="514.1" y="484.1" width="23.9" height="30.9" fill="#2a2389"/>
<rect x="514.1" y="471.2" width="23.9" height="12.9" fill="#7640b8"/>
<rect x="514.1" y="465.1" width="23.9" height="6.1" fill="#e8a0d6"/>
<rect x="514.1" y="463.0" width="23.9" height="2.1" fill="#d3266f"/>
<rect x="548.0" y="507.0" width="22.9" height="99.5" fill="#6f9ef6"/>
<rect x="548.0" y="474.1" width="22.9" height="32.9" fill="#2a2389"/>
<rect x="548.0" y="459.2" width="22.9" height="14.9" fill="#7640b8"/>
<rect x="548.0" y="453.0" width="22.9" height="6.2" fill="#e8a0d6"/>
<rect x="548.0" y="451.2" width="22.9" height="1.8" fill="#d3266f"/>
<rect x="580.9" y="498.0" width="24.0" height="108.5" fill="#6f9ef6"/>
<rect x="580.9" y="461.2" width="24.0" height="36.8" fill="#2a2389"/>
<rect x="580.9" y="446.3" width="24.0" height="14.9" fill="#7640b8"/>
<rect x="580.9" y="438.3" width="24.0" height="8.0" fill="#e8a0d6"/>
<rect x="580.9" y="436.3" width="24.0" height="2.0" fill="#d3266f"/>
<rect x="615.2" y="494.1" width="22.8" height="112.4" fill="#6f9ef6"/>
<rect x="615.2" y="462.2" width="22.8" height="31.9" fill="#2a2389"/>
<rect x="615.2" y="448.1" width="22.8" height="14.1" fill="#7640b8"/>
<rect x="615.2" y="441.2" width="22.8" height="6.9" fill="#e8a0d6"/>
<rect x="615.2" y="439.1" width="22.8" height="2.1" fill="#d3266f"/>
<rect x="648.1" y="480.0" width="23.9" height="126.5" fill="#6f9ef6"/>
<rect x="648.1" y="442.9" width="23.9" height="37.1" fill="#2a2389"/>
<rect x="648.1" y="427.9" width="23.9" height="15.0" fill="#7640b8"/>
<rect x="648.1" y="420.1" width="23.9" height="7.8" fill="#e8a0d6"/>
<rect x="648.1" y="417.2" width="23.9" height="2.9" fill="#d3266f"/>
<rect x="240.8" y="605.6" width="436.4" height="1.9" fill="#333"/>
</svg>
<div style="position:absolute;top:177.00px;font-size:26.4px;line-height:26.4px;white-space:pre;color:#444;font-kerning:none;-webkit-text-stroke:0.22px;letter-spacing:1.016px;left:304.94px;">NY State Hospital Admissions</div>
<div style="position:absolute;top:254.00px;font-size:18.8px;line-height:18.8px;white-space:pre;color:#444;font-kerning:none;-webkit-text-stroke:0.22px;letter-spacing:0.600px;left:193.67px;">150B</div>
<div style="position:absolute;top:315.00px;font-size:18.8px;line-height:18.8px;white-space:pre;color:#444;font-kerning:none;-webkit-text-stroke:0.22px;letter-spacing:1.000px;left:192.47px;">100B</div>
<div style="position:absolute;top:377.00px;font-size:18.8px;line-height:18.8px;white-space:pre;color:#444;font-kerning:none;-webkit-text-stroke:0.22px;letter-spacing:0.889px;left:204.15px;">50B</div>
<div style="position:absolute;top:438.00px;font-size:18.8px;line-height:18.8px;white-space:pre;color:#444;font-kerning:none;-webkit-text-stroke:0.22px;left:228.66px;">0</div>
<div style="position:absolute;top:452.00px;font-size:18.8px;line-height:18.8px;white-space:pre;color:#444;font-kerning:none;-webkit-text-stroke:0.22px;letter-spacing:0.845px;left:268.71px;">2010</div>
<div style="position:absolute;top:452.00px;font-size:18.8px;line-height:18.8px;white-space:pre;color:#444;font-kerning:none;-webkit-text-stroke:0.22px;letter-spacing:0.630px;left:436.96px;">2015</div>
<div style="position:absolute;top:452.00px;font-size:18.8px;line-height:18.8px;white-space:pre;color:#444;font-kerning:none;-webkit-text-stroke:0.22px;letter-spacing:2.245px;left:602.21px;">2020</div>
<div style="position:absolute;top:514.00px;font-size:23.7px;line-height:23.7px;white-space:pre;color:#444;font-kerning:none;-webkit-text-stroke:0.22px;letter-spacing:0.180px;left:433.73px;">Year</div>
<div style="position:absolute;left:69.6px;top:326.3px;width:200px;height:40px;line-height:40px;text-align:center;font-size:23.3px;color:#444;white-space:pre;letter-spacing:0.995px;-webkit-text-stroke:0.22px;transform:rotate(-90deg);text-indent:0.995px">Total Charges</div>
<div style="position:absolute;left:697.9px;top:260.0px;width:18px;height:18px;background:#d3266f"></div>
<div style="position:absolute;top:261.00px;font-size:19.5px;line-height:19.5px;white-space:pre;color:#444;font-kerning:none;-webkit-text-stroke:0.22px;letter-spacing:0.126px;left:737.47px;">Trauma</div>
<div style="position:absolute;left:697.9px;top:289.9px;width:18px;height:18px;background:#e8a0d6"></div>
<div style="position:absolute;top:291.00px;font-size:19.5px;line-height:19.5px;white-space:pre;color:#444;font-kerning:none;-webkit-text-stroke:0.22px;letter-spacing:1.219px;left:736.30px;">Newborn</div>
<div style="position:absolute;left:697.9px;top:319.8px;width:18px;height:18px;background:#7640b8"></div>
<div style="position:absolute;top:321.00px;font-size:19.5px;line-height:19.5px;white-space:pre;color:#444;font-kerning:none;-webkit-text-stroke:0.22px;letter-spacing:0.921px;left:736.40px;">Urgent</div>
<div style="position:absolute;left:697.9px;top:349.7px;width:18px;height:18px;background:#2a2389"></div>
<div style="position:absolute;top:351.00px;font-size:19.5px;line-height:19.5px;white-space:pre;color:#444;font-kerning:none;-webkit-text-stroke:0.22px;letter-spacing:0.669px;left:736.30px;">Elective</div>
<div style="position:absolute;left:697.9px;top:379.6px;width:18px;height:18px;background:#6f9ef6"></div>
<div style="position:absolute;top:381.00px;font-size:19.5px;line-height:19.5px;white-space:pre;color:#444;font-kerning:none;-webkit-text-stroke:0.22px;letter-spacing:0.589px;left:736.30px;">Emergency</div>
<div style="position:absolute;left:1895px;top:35px;width:19px;height:660px;background:#fafafa;border-left:1.5px solid #e6e6e6"></div>
<div style="position:absolute;left:1896px;top:54.2px;width:18px;height:1.5px;background:#e8e8e8"></div>
<div style="position:absolute;left:1896px;top:678.2px;width:18px;height:1.5px;background:#e8e8e8"></div>
<svg style="position:absolute;left:1896px;top:35px" width="18" height="20" viewBox="0 0 18 20"><path d="M3.9 13.4 L9 4.4 L14.1 13.4 z" fill="#c9c9c9"/></svg>
<svg style="position:absolute;left:1896px;top:679px" width="18" height="16" viewBox="0 0 18 16"><path d="M3.9 6 L9 15.2 L14.1 6 z" fill="#bdbdbd"/></svg>
<div style="position:absolute;left:1899.6px;top:58.8px;width:13.4px;height:60px;border-radius:7px;background:#c1c1c1"></div>
</div></body></html>
